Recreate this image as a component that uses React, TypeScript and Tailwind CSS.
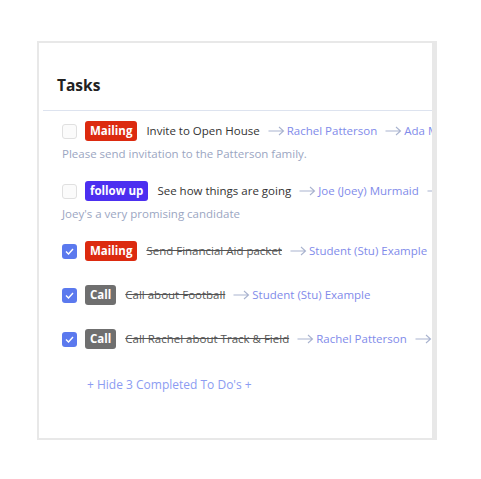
import React from "react";

type Task = {
  tag: string;
  tagClass: string;
  title: string;
  people: string[];
  done: boolean;
  note?: string;
};

const tasks: Task[] = [
  {
    tag: "Mailing",
    tagClass: "bg-[#dc2a0f]",
    title: "Invite to Open House",
    people: ["Rachel Patterson", "Ada Murmaid"],
    done: false,
    note: "Please send invitation to the Patterson family.",
  },
  {
    tag: "follow up",
    tagClass: "bg-[#4c2ff0]",
    title: "See how things are going",
    people: ["Joe (Joey) Murmaid", "Ada Murmaid"],
    done: false,
    note: "Joey's a very promising candidate",
  },
  {
    tag: "Mailing",
    tagClass: "bg-[#dc2a0f]",
    title: "Send Financial Aid packet",
    people: ["Student (Stu) Example", "Other"],
    done: true,
  },
  {
    tag: "Call",
    tagClass: "bg-[#6f6f6f]",
    title: "Call about Football",
    people: ["Student (Stu) Example"],
    done: true,
  },
  {
    tag: "Call",
    tagClass: "bg-[#6f6f6f]",
    title: "Call Rachel about Track & Field",
    people: ["Rachel Patterson", "Dave Patterson"],
    done: true,
  },
];

const Arrow = () => (
  <svg width="17" height="10" viewBox="0 0 17 10" className="shrink-0" fill="none">
    <path d="M0.5 5H15.5M11 1L15.5 5L11 9" stroke="#a9b3cf" strokeWidth="1.1" />
  </svg>
);

const Checkbox = ({ checked }: { checked: boolean }) =>
  checked ? (
    <span className="w-[15px] h-[15px] shrink-0 rounded-[3px] bg-[#5b79ee] flex items-center justify-center">
      <svg width="9" height="7" viewBox="0 0 9 7" fill="none">
        <path d="M1 3.5L3.5 6L8 1" stroke="#ffffff" strokeWidth="1.4" />
      </svg>
    </span>
  ) : (
    <span className="w-[15px] h-[15px] shrink-0 rounded-[3px] border border-[#e0e0e0] bg-[#fbfbfb]" />
  );

const TaskRow = ({ task }: { task: Task }) => (
  <div className={task.note ? "mb-[20px]" : "mb-[24px]"}>
    <div className="flex items-center h-[20px] whitespace-nowrap">
      <Checkbox checked={task.done} />
      <span
        className={`ml-[8px] h-[20px] px-[5px] rounded-[3px] text-white text-[11.5px] font-bold leading-[20px] ${task.tagClass}`}
      >
        {task.tag}
      </span>
      <span
        className={`ml-[9px] text-[11.5px] ${task.done ? "line-through text-[#555555]" : "text-[#333333]"}`}
      >
        {task.title}
      </span>
      {task.people.map((p) => (
        <span key={p} className="flex items-center ml-[8px]">
          <Arrow />
          <span className="ml-[2px] text-[11.5px] text-[#7f8bea]">{p}</span>
        </span>
      ))}
    </div>
    {task.note && (
      <div className="mt-[5px] text-[11.5px] leading-[15px] text-[#9ba6c2] whitespace-nowrap">{task.note}</div>
    )}
  </div>
);

export default function App() {
  return (
    <div className="w-[481px] h-[479px] bg-white pt-[41px] pl-[37px]" style={{ fontFamily: "'Open Sans', sans-serif" }}>
      <div className="w-[400px] h-[399px] border-2 border-r-[5px] border-[#e8e8e8] overflow-hidden">
        <div className="ml-[4px] h-[68px] border-b border-[#dde3ef] flex items-end pb-[15px] pl-[14px]">
          <h2 className="text-[15.5px] font-bold text-[#222222] leading-[20px]">Tasks</h2>
        </div>
        <div className="pl-[23px] pt-[10px]">
          {tasks.map((t, i) => (
            <TaskRow key={i} task={t} />
          ))}
          <div className="ml-[25px] pt-[3px] text-[12px] text-[#8c9cf2]">+ Hide 3 Completed To Do's +</div>
        </div>
      </div>
    </div>
  );
}
